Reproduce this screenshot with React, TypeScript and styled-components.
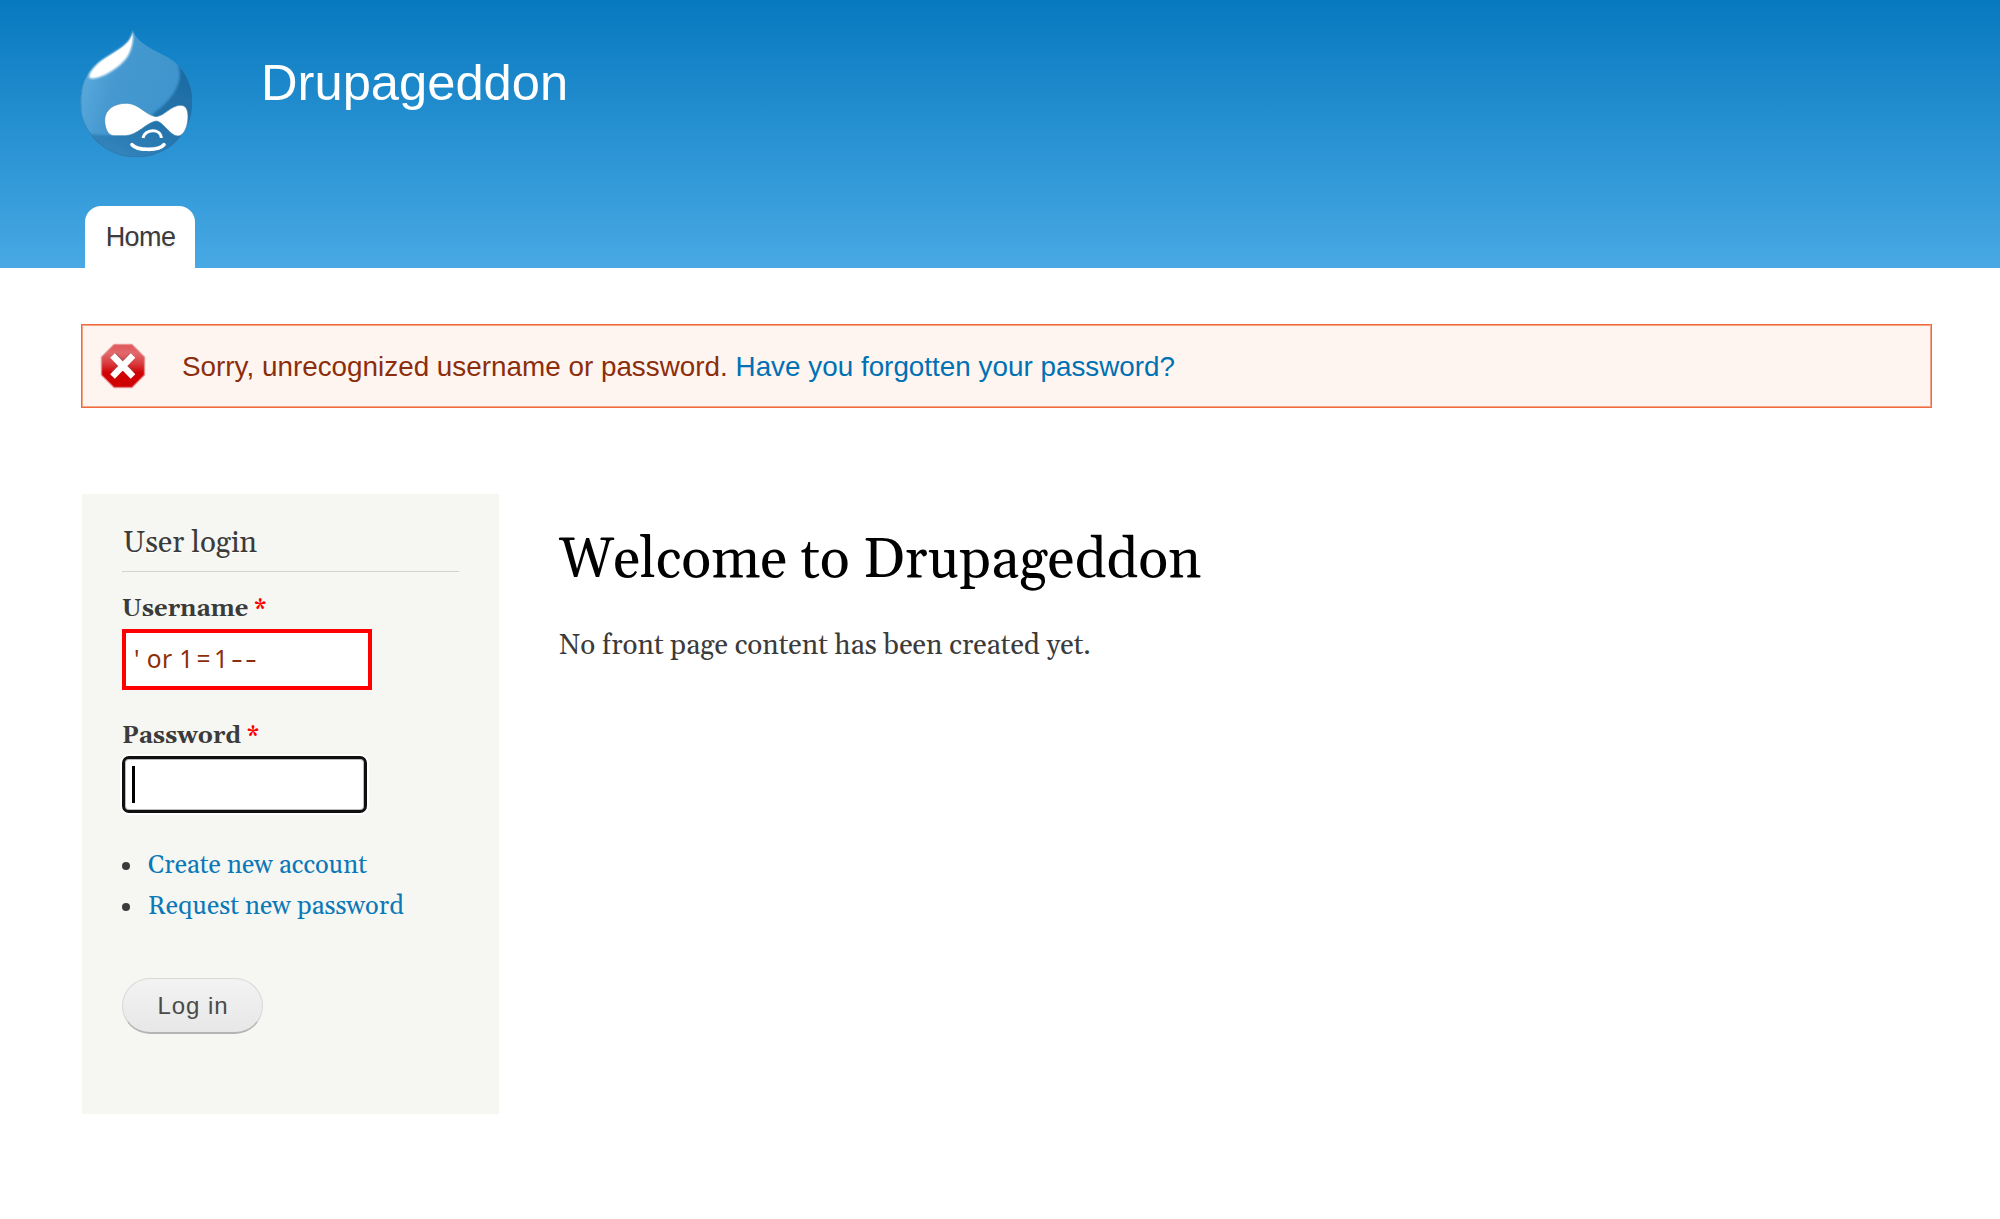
import React from "react";
import styled, { createGlobalStyle } from "styled-components";

const serif = `Gelasio, "Liberation Serif", serif`;
const sans = `"Liberation Sans", sans-serif`;

const GlobalStyle = createGlobalStyle`
  * { box-sizing: border-box; }
  body { margin: 0; background: #fff; color: #3b3b3b; }
`;

const Page = styled.div`
  width: 2000px;
  height: 1219px;
  overflow: hidden;
  background: #fff;
`;

const Header = styled.header`
  height: 268px;
  padding: 29px 80px 0;
  display: flex;
  flex-direction: column;
  justify-content: space-between;
  background: linear-gradient(#0779bf, #48a9e4);
`;

const Brand = styled.div`
  display: flex;
  gap: 67px;
  align-items: flex-start;
`;

const SiteName = styled.div`
  margin-top: 24px;
  font: 50.7px/60px ${sans};
  color: #fff;
  white-space: nowrap;
`;

const Nav = styled.nav`
  display: flex;
  padding-left: 5px;
`;

const Tab = styled.a`
  width: 110px;
  height: 62px;
  padding-left: 1px;
  border-radius: 16px 16px 0 0;
  background: #fff;
  text-align: center;
  font: 27px/62px ${sans};
  letter-spacing: -0.6px;
  color: #3b3b3b;
  text-shadow: 0 2px 1px #eee;
`;

const ErrorBox = styled.div`
  margin: 56px 68px 0 81px;
  height: 84px;
  padding-left: 18px;
  display: flex;
  align-items: center;
  gap: 36px;
  border: 1px solid #ef6a3f;
  box-shadow: inset 0 0 0 1px #f6a384;
  background: #fef5f1;
  font: 27.85px/40px ${sans};
  color: #8c2e0b;
  white-space: nowrap;
`;

const ErrorText = styled.span`
  padding-top: 1px;
`;

const ErrorLink = styled.a`
  color: #0071b3;
`;

const Columns = styled.main`
  display: flex;
  align-items: flex-start;
  margin: 86px 0 0 82px;
  gap: 60px;
`;

const Sidebar = styled.aside`
  width: 417px;
  height: 620px;
  padding: 24px 40px 0 40px;
  background: #f6f6f2;
  font-family: ${serif};
`;

const BlockTitle = styled.h2`
  margin: 0;
  height: 54px;
  padding: 2px 0 0 1px;
  border-bottom: 1.5px solid #d4d4cf;
  font: 29.5px/48px ${serif};
  text-shadow: 0 1px 0 #fff;
`;

const Label = styled.label<{ $top: number }>`
  display: block;
  margin-top: ${(p) => p.$top}px;
  height: 34px;
  font: bold 23.8px/34px ${serif};
`;

const Required = styled.span`
  color: #f00;
`;

const ErrorField = styled.div`
  width: 250px;
  height: 61px;
  margin-top: 3px;
  padding-left: 8px;
  display: flex;
  border: 4px solid #f00;
  background: #fff;
  font: 24.5px/51px "Noto Sans", sans-serif;
  color: #8c2e0b;
  white-space: pre;
`;

const Chars = styled.span<{ $spacing: number; $stretch?: number }>`
  letter-spacing: ${(p) => p.$spacing}px;
  transform: scaleX(${(p) => p.$stretch ?? 1});
  transform-origin: left;
`;

const FocusField = styled.div`
  display: flex;
  align-items: center;
  width: 245px;
  height: 57px;
  margin-top: 3px;
  padding-left: 7px;
  border: 3px solid #101010;
  border-radius: 7px;
  background: #fff;
  box-shadow: 0 0 0 2px #fff, inset 0 0 0 1px #bbb;
`;

const Caret = styled.span`
  width: 3px;
  height: 37px;
  background: #000;
`;

const Links = styled.ul`
  list-style: none;
  margin: 32px 0 0;
  padding: 0;
`;

const LinkItem = styled.li`
  display: flex;
  align-items: center;
  gap: 18px;
  height: 41px;
  white-space: nowrap;
`;

const Bullet = styled.span`
  width: 8px;
  height: 8px;
  border-radius: 50%;
  background: #3b3b3b;
`;

const LinkText = styled.a`
  font: 25.4px/41px ${serif};
  color: #0b78b8;
`;

const LoginButton = styled.button`
  display: block;
  width: 141px;
  height: 56px;
  margin: 51px 0 0;
  padding: 0 0 0 1px;
  border: 1px solid #d8d8d8;
  border-bottom: 2px solid #b4b4b4;
  border-radius: 28px;
  background: linear-gradient(#f3f3f3, #e7e7e7);
  font: 24px/52px ${sans};
  letter-spacing: 0.9px;
  color: #4a4a4a;
`;

const Content = styled.section`
  padding-top: 33px;
  white-space: nowrap;
`;

const Title = styled.h1`
  margin: 0;
  font: 55.6px/68px ${serif};
  color: #000;
`;

const Text = styled.p`
  margin: 31px 0 0;
  font: 27.85px/40px ${serif};
`;

const Logo = () => (
  <svg width="114" height="129" viewBox="61 55 342 387">
    <defs>
      <linearGradient id="body" x1="0" y1="0.2" x2="1" y2="0.5">
        <stop offset="0" stopColor="#5fadde" />
        <stop offset="0.35" stopColor="#4599d0" />
        <stop offset="1" stopColor="#3d93cc" />
      </linearGradient>
      <linearGradient id="shade" x1="0.9" y1="0" x2="0.4" y2="1">
        <stop offset="0" stopColor="#1c6ba3" />
        <stop offset="0.6" stopColor="#2474ab" />
        <stop offset="1" stopColor="#3384bd" />
      </linearGradient>
      <clipPath id="drop">
        <path d="M218 58C214 108 152 126 112 158C76 190 62 232 62 275C62 370 138 440 230 440C325 440 398 370 398 272C398 215 372 175 340 150C300 122 238 108 218 58Z" />
      </clipPath>
      <filter id="soft"><feGaussianBlur stdDeviation="3" /></filter>
    </defs>
    <g clipPath="url(#drop)">
      <rect x="55" y="50" width="350" height="400" fill="url(#body)" />
      <path d="M355 162C375 215 335 270 285 305C250 345 190 374 150 374L70 370L110 450H410V162Z" fill="url(#shade)" filter="url(#soft)" />
      <path d="M58 260C58 370 140 440 230 440C325 440 400 370 400 272" fill="none" stroke="#2a70a2" strokeWidth="5" opacity="0.6" />
      <path d="M64 300C60 225 74 190 112 158" fill="none" stroke="#347fae" strokeWidth="4" opacity="0.7" />
    </g>
    <path d="M219 62C216 108 152 126 116 158C95 176 84 198 90 203C125 208 190 165 207 132C217 112 222 90 219 62Z" fill="#fff" filter="url(#soft)" />
    <path d="M218 68C216 106 154 128 118 160C99 177 90 196 94 199C128 202 184 162 203 128C214 108 220 86 218 68Z" fill="#fff" />
    <path d="M204 278C238 280 262 316 290 318C315 315 335 284 362 284C379 284 385 298 385 318C385 346 373 376 354 376C332 376 310 333 290 331C262 334 232 375 198 375H160C143 373 135 350 135 328C135 296 166 276 204 278Z" fill="#fff" stroke="#3a84b2" strokeWidth="2" />
    <path d="M250 382C254 355 303 351 305 382" fill="none" stroke="#fff" strokeWidth="9" />
    <path d="M217 402C233 420 298 421 313 402" fill="none" stroke="#fff" strokeWidth="11" strokeLinecap="round" />
  </svg>
);

const ErrorIcon = () => (
  <svg width="46" height="46" viewBox="0 0 46 46">
    <defs>
      <linearGradient id="red" x1="0" y1="0" x2="0" y2="1">
        <stop offset="0" stopColor="#e0555a" />
        <stop offset="0.2" stopColor="#e06a6c" />
        <stop offset="0.45" stopColor="#d93a3d" />
        <stop offset="0.65" stopColor="#cf0205" />
        <stop offset="1" stopColor="#d00000" />
      </linearGradient>
    </defs>
    <path d="M14 1.5H32L44.5 14V32L32 44.5H14L1.5 32V14Z" fill="url(#red)" stroke="#e58a8a" strokeOpacity="0.7" strokeWidth="1.5" strokeLinejoin="round" />
    <path d="M14 12L32 30M32 12L14 30" stroke="#8d5050" strokeWidth="6" opacity="0.6" />
    <path d="M12.5 12.5L33 33.5M33 12.5L12.5 33.5" stroke="#fff" strokeWidth="6.5" />
  </svg>
);

export default function App() {
  return (
    <Page>
      <GlobalStyle />
      <Header>
        <Brand>
          <Logo />
          <SiteName>Drupageddon</SiteName>
        </Brand>
        <Nav>
          <Tab>Home</Tab>
        </Nav>
      </Header>
      <ErrorBox>
        <ErrorIcon />
        <ErrorText>
          Sorry, unrecognized username or password. <ErrorLink>Have you forgotten your password?</ErrorLink>
        </ErrorText>
      </ErrorBox>
      <Columns>
        <Sidebar>
          <BlockTitle>User login</BlockTitle>
          <Label $top={20}>
            Username <Required>*</Required>
          </Label>
          <ErrorField>
            <Chars $spacing={0.4}>' or </Chars>
            <Chars $spacing={3.4}>1=1</Chars>
            <Chars $spacing={1.4} $stretch={1.5}>--</Chars>
          </ErrorField>
          <Label $top={29}>
            Password <Required>*</Required>
          </Label>
          <FocusField>
            <Caret />
          </FocusField>
          <Links>
            <LinkItem>
              <Bullet />
              <LinkText>Create new account</LinkText>
            </LinkItem>
            <LinkItem>
              <Bullet />
              <LinkText>Request new password</LinkText>
            </LinkItem>
          </Links>
          <LoginButton>Log in</LoginButton>
        </Sidebar>
        <Content>
          <Title>Welcome to Drupageddon</Title>
          <Text>No front page content has been created yet.</Text>
        </Content>
      </Columns>
    </Page>
  );
}
